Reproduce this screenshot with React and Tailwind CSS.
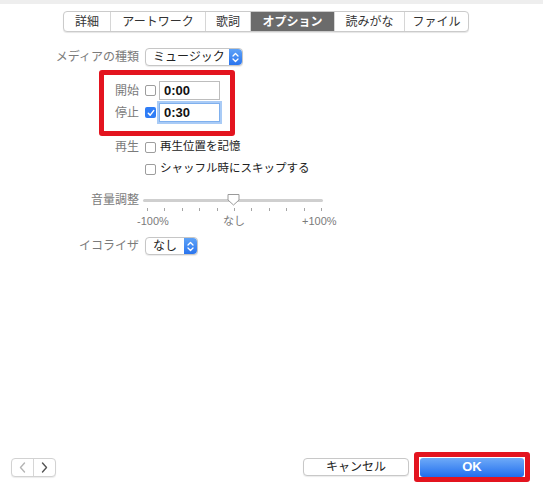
import React from "react";

const tabs = [
  { label: "詳細", w: "w-[46px]" },
  { label: "アートワーク", w: "w-[95px]" },
  { label: "歌詞", w: "w-[45px]" },
  { label: "オプション", w: "w-[84px]", active: true },
  { label: "読みがな", w: "w-[70px]" },
  { label: "ファイル", w: "w-[64px]" },
];

function Stepper() {
  return (
    <div className="flex h-full w-[13px] items-center justify-center rounded-r-[4px] bg-gradient-to-b from-[#5ea2f7] to-[#2a74ee]">
      <svg width="7" height="11" viewBox="0 0 7 11" fill="none" stroke="white" strokeWidth="1.3" strokeLinecap="round" strokeLinejoin="round">
        <path d="M1 4 L3.5 1.5 L6 4" />
        <path d="M1 7 L3.5 9.5 L6 7" />
      </svg>
    </div>
  );
}

function Popup({ value, width }) {
  return (
    <div className={`flex h-[18px] ${width} items-stretch rounded-[4px] border border-[#c6c6c6] bg-white shadow-[0_1px_1px_rgba(0,0,0,0.08)]`}>
      <div className="flex flex-1 items-center pl-[7px] text-[12px] text-[#222]">{value}</div>
      <Stepper />
    </div>
  );
}

function Checkbox({ checked }) {
  if (checked) {
    return (
      <div className="flex h-[11px] w-[11px] shrink-0 items-center justify-center rounded-[2px] bg-[#2f7df6]">
        <svg width="8" height="8" viewBox="0 0 8 8" fill="none" stroke="white" strokeWidth="1.5" strokeLinecap="round" strokeLinejoin="round">
          <path d="M1.3 4.2 L3.2 6.1 L6.7 1.6" />
        </svg>
      </div>
    );
  }
  return <div className="h-[11px] w-[11px] shrink-0 rounded-[2px] border border-[#9d9d9d] bg-white" />;
}

function Label({ children, className = "w-[139px]" }) {
  return <div className={`${className} shrink-0 whitespace-nowrap text-right text-[12px] text-[#7b7b7b]`}>{children}</div>;
}

export default function App() {
  const ticks = Array.from({ length: 11 });

  return (
    <div className="flex h-[495px] w-[543px] flex-col bg-white font-['Liberation_Sans','Noto_Sans_CJK_JP',sans-serif]">
      <div className="h-[4px] bg-[#eeeeee]" />

      {/* tab bar */}
      <div className="ml-[63px] mt-[7px] flex h-[21px] w-fit overflow-hidden rounded-[4px] border border-[#cbcbcb] bg-white shadow-[0_1px_1px_rgba(0,0,0,0.1)]">
        {tabs.map((t, i) => (
          <div
            key={t.label}
            className={`${t.w} flex items-center justify-center text-[12px] ${
              t.active ? "bg-[#6b6b6b] font-bold text-white" : "text-[#333]"
            } ${i > 0 ? "border-l border-[#d6d6d6]" : ""}`}
          >
            {t.label}
          </div>
        ))}
      </div>

      {/* media kind */}
      <div className="mt-[16px] flex h-[18px] items-center">
        <Label>メディアの種類</Label>
        <div className="ml-[6px]">
          <Popup value="ミュージック" width="w-[98px]" />
        </div>
      </div>

      {/* start / stop */}
      <div className="ml-[99px] mt-[4px] h-[66px] w-[136px] rounded-[3px] border-[5px] border-[#e3141f] pt-[6px]">
        <div className="flex h-[19px] items-center">
          <Label className="w-[35px]">開始</Label>
          <div className="ml-[6px]">
            <Checkbox />
          </div>
          <div className="ml-[3px] flex h-[19px] w-[61px] items-center border border-[#bdbdbd] pl-[4px] text-[13px] font-bold text-[#111]">
            0:00
          </div>
        </div>
        <div className="mt-[3px] flex h-[19px] items-center">
          <Label className="w-[35px]">停止</Label>
          <div className="ml-[6px]">
            <Checkbox checked />
          </div>
          <div className="ml-[3px] flex h-[19px] w-[61px] items-center border border-[#7fb0ee] pl-[4px] text-[13px] font-bold text-[#111] ring-[2px] ring-[#a9cbf6]">
            0:30
          </div>
        </div>
      </div>

      {/* playback */}
      <div className="mt-[3px] flex h-[16px] items-center">
        <Label>再生</Label>
        <div className="ml-[6px]">
          <Checkbox />
        </div>
        <div className="ml-[4px] text-[11.5px] text-[#222]">再生位置を記憶</div>
      </div>
      <div className="mt-[6px] flex h-[16px] items-center pl-[145px]">
        <Checkbox />
        <div className="ml-[4px] text-[11.5px] text-[#222]">シャッフル時にスキップする</div>
      </div>

      {/* volume */}
      <div className="mt-[15px] flex h-[16px] items-center">
        <Label>音量調整</Label>
        <div className="relative ml-[4px] h-[3px] w-[180px] rounded-full bg-[#cfcfcf]">
          <svg className="absolute left-[84px] top-[-6px]" width="13" height="13" viewBox="0 0 13 13">
            <path d="M1 1.5 H12 V7 L6.5 12 L1 7 Z" fill="white" stroke="#9a9a9a" strokeWidth="1" strokeLinejoin="round" />
          </svg>
        </div>
      </div>
      <div className="ml-[147px] flex w-[175px] justify-between">
        {ticks.map((_, i) => (
          <div key={i} className="h-[3px] w-[1px] bg-[#a5a5a5]" />
        ))}
      </div>
      <div className="mt-[3px] flex h-[14px] items-center whitespace-nowrap text-[11px] text-[#7b7b7b]">
        <div className="ml-[137px] w-[34px]">-100%</div>
        <div className="ml-[52px] w-[24px]">なし</div>
        <div className="ml-[55px]">+100%</div>
      </div>

      {/* equalizer */}
      <div className="mt-[9px] flex h-[18px] items-center">
        <Label>イコライザ</Label>
        <div className="ml-[6px]">
          <Popup value="なし" width="w-[53px]" />
        </div>
      </div>

      <div className="flex-1" />

      {/* footer buttons */}
      <div className="mb-[13px] flex h-[30px] items-center">
        <div className="ml-[11px] flex h-[19px] w-[45px] overflow-hidden rounded-[4px] border border-[#d2d2d2] bg-white shadow-[0_1px_1px_rgba(0,0,0,0.08)]">
          <div className="flex flex-1 items-center justify-center">
            <svg width="7" height="11" viewBox="0 0 7 11" fill="none" stroke="#b5b5b5" strokeWidth="1.4" strokeLinecap="round" strokeLinejoin="round">
              <path d="M5.5 1 L1.5 5.5 L5.5 10" />
            </svg>
          </div>
          <div className="w-[1px] bg-[#d6d6d6]" />
          <div className="flex flex-1 items-center justify-center">
            <svg width="7" height="11" viewBox="0 0 7 11" fill="none" stroke="#555" strokeWidth="1.4" strokeLinecap="round" strokeLinejoin="round">
              <path d="M1.5 1 L5.5 5.5 L1.5 10" />
            </svg>
          </div>
        </div>
        <div className="flex-1" />
        <div className="flex h-[18px] w-[106px] items-center justify-center rounded-[4px] border border-[#c8c8c8] bg-white text-[12px] text-[#222] shadow-[0_1px_1px_rgba(0,0,0,0.08)]">
          キャンセル
        </div>
        <div className="ml-[5px] mr-[13px] flex h-[30px] w-[116px] items-center justify-center rounded-[3px] border-[5px] border-[#e3141f]">
          <div className="flex h-[19px] w-[104px] items-center justify-center rounded-[3px] bg-gradient-to-b from-[#6eaaf8] to-[#1f6ded] text-[13px] font-bold text-white">
            OK
          </div>
        </div>
      </div>
    </div>
  );
}
